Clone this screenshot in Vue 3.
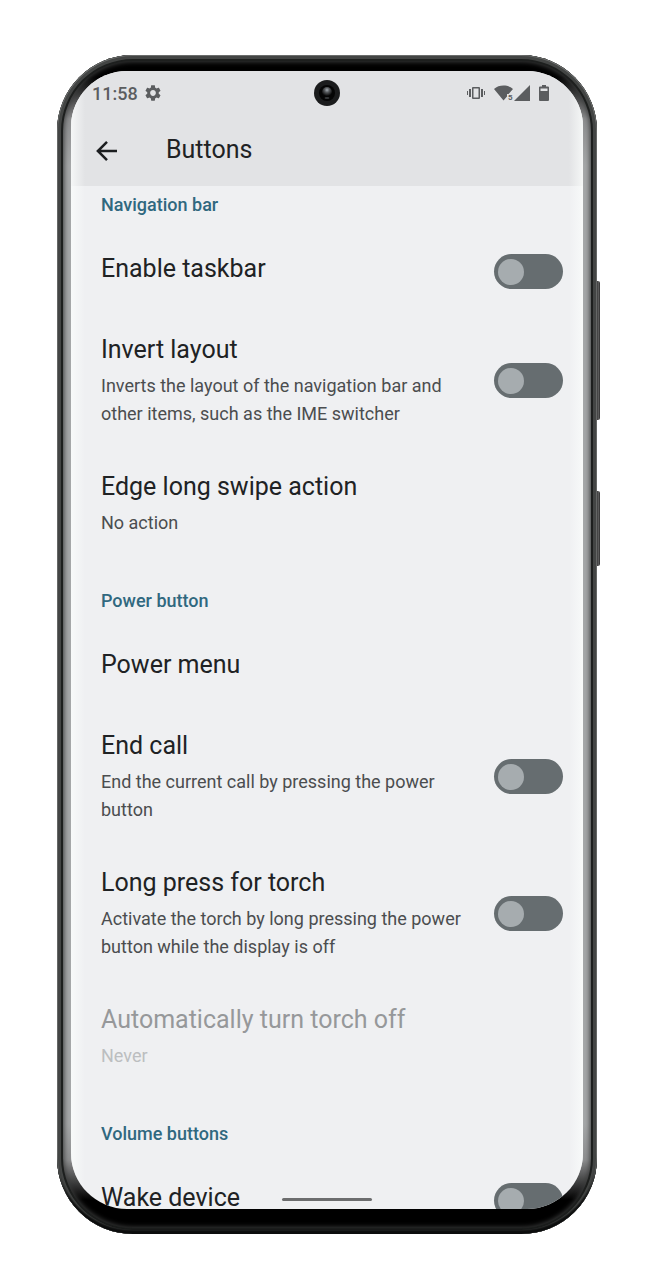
<script setup>
import { reactive } from 'vue'

const groups = reactive([
  {
    title: 'Navigation bar',
    rows: [
      { id: 'taskbar', label: 'Enable taskbar', toggle: true, on: false },
      {
        id: 'invert',
        label: 'Invert layout',
        note: 'Inverts the layout of the navigation bar and other items, such as the IME switcher',
        toggle: true,
        on: false,
      },
      { id: 'edge', label: 'Edge long swipe action', note: 'No action' },
    ],
  },
  {
    title: 'Power button',
    rows: [
      { id: 'menu', label: 'Power menu' },
      {
        id: 'endcall',
        label: 'End call',
        note: 'End the current call by pressing the power button',
        toggle: true,
        on: false,
      },
      {
        id: 'torch',
        label: 'Long press for torch',
        note: 'Activate the torch by long pressing the power button while the display is off',
        toggle: true,
        on: false,
      },
      { id: 'autotorch', label: 'Automatically turn torch off', note: 'Never', disabled: true },
    ],
  },
  {
    title: 'Volume buttons',
    rows: [{ id: 'wake', label: 'Wake device', toggle: true, on: false }],
  },
])
</script>

<template>
  <div class="stage">
    <div class="phone">
      <span class="side-key volume"></span>
      <span class="side-key power"></span>
      <div class="bezel">
        <div class="screen">
          <header class="top">
            <div class="status">
              <span class="clock">11:58</span>
              <svg class="gear" viewBox="2 2 20 20" aria-hidden="true">
                <path
                  d="M19.14 12.94c.04-.3.06-.61.06-.94 0-.32-.02-.64-.07-.94l2.03-1.58c.18-.14.23-.41.12-.61l-1.92-3.32c-.12-.22-.37-.29-.59-.22l-2.39.96c-.5-.38-1.03-.7-1.62-.94l-.36-2.54c-.04-.24-.24-.41-.48-.41h-3.84c-.24 0-.43.17-.47.41l-.36 2.54c-.59.24-1.13.57-1.62.94l-2.39-.96c-.22-.08-.47 0-.59.22L2.74 8.87c-.12.21-.08.47.12.61l2.03 1.58c-.05.3-.09.63-.09.94s.02.64.07.94l-2.03 1.58c-.18.14-.23.41-.12.61l1.92 3.32c.12.22.37.29.59.22l2.39-.96c.5.38 1.03.7 1.62.94l.36 2.54c.05.24.24.41.48.41h3.84c.24 0 .44-.17.47-.41l.36-2.54c.59-.24 1.13-.56 1.62-.94l2.39.96c.22.08.47 0 .59-.22l1.92-3.32c.12-.22.07-.47-.12-.61l-2.01-1.58zM12 15.6c-1.98 0-3.6-1.62-3.6-3.6s1.62-3.6 3.6-3.6 3.6 1.62 3.6 3.6-1.62 3.6-3.6 3.6z"
                />
              </svg>
              <svg class="vibrate" viewBox="0 0 18 14" aria-hidden="true">
                <path d="M0 5h1v4H0zM2 3h2v8H2zM14 3h2v8h-2zM17 5h1v4h-1z" />
                <path
                  fill-rule="evenodd"
                  d="M6 1h6a1 1 0 0 1 1 1v10a1 1 0 0 1-1 1H6a1 1 0 0 1-1-1V2a1 1 0 0 1 1-1zM6.500 2.500v9h5v-9z"
                />
              </svg>
              <svg class="wifi" viewBox="0 0 20 16" aria-hidden="true">
                <path d="M0 4C5-.6 14-.6 19 4L14.600 9H13V11.500L9.500 15.600z" />
                <text x="14" y="15">5</text>
              </svg>
              <svg class="signal" viewBox="0 0 16 16" aria-hidden="true">
                <path d="M0 16L16 0V16z" />
              </svg>
              <svg class="battery" viewBox="0 0 10 16" aria-hidden="true">
                <path
                  fill-rule="evenodd"
                  d="M3 0h4v1.500h2a1 1 0 0 1 1 1V15a1 1 0 0 1-1 1H1a1 1 0 0 1-1-1V2.500a1 1 0 0 1 1-1h2zM1.500 3.500v2.500h7v-2.500z"
                />
              </svg>
            </div>
            <div class="bar">
              <button class="back" type="button" aria-label="Back">
                <svg viewBox="0 0 24 24" aria-hidden="true">
                  <path d="M12 4.700L4.700 12l7.300 7.300M5 12h15" />
                </svg>
              </button>
              <h1>Buttons</h1>
            </div>
            <svg class="camera" viewBox="0 0 26 26" aria-hidden="true">
              <defs>
                <radialGradient id="lens" cx="50%" cy="30%" r="60%">
                  <stop offset="0" stop-color="#a4acb2" />
                  <stop offset=".4" stop-color="#56595c" />
                  <stop offset="1" stop-color="#060606" />
                </radialGradient>
              </defs>
              <circle cx="13" cy="13" r="13" fill="#1b1c1d" />
              <circle cx="13" cy="13" r="8" fill="#050505" />
              <circle cx="13" cy="12" r="5" fill="url(#lens)" />
              <ellipse cx="13" cy="18" rx="2.500" ry="1" fill="#36383a" />
            </svg>
          </header>

          <main class="list">
            <section v-for="group in groups" :key="group.title">
              <h2>{{ group.title }}</h2>
              <div
                v-for="row in group.rows"
                :key="row.id"
                class="row"
                :class="{ disabled: row.disabled }"
              >
                <div class="copy">
                  <label v-if="row.toggle" class="label" :for="row.id">{{ row.label }}</label>
                  <span v-else class="label">{{ row.label }}</span>
                  <p v-if="row.note">{{ row.note }}</p>
                </div>
                <input
                  v-if="row.toggle"
                  :id="row.id"
                  v-model="row.on"
                  class="switch"
                  type="checkbox"
                  role="switch"
                />
              </div>
            </section>
          </main>
          <span class="edges"></span>
          <span class="pill"></span>
        </div>
      </div>
    </div>
  </div>
</template>

<style>
body {
  background: #fff;
}
</style>

<style scoped>
.stage {
  box-sizing: border-box;
  height: 100vh;
  padding: 55px 57px 46px;
  font-family: Roboto, 'Liberation Sans', sans-serif;
  color: #202224;
}
.phone {
  position: relative;
  height: 100%;
}
.side-key {
  position: absolute;
  right: -3px;
  width: 5px;
  border-radius: 2px;
  background: linear-gradient(90deg, #222 0 40%, #6a6a6a 60%, #2b2b2b);
}
.volume {
  top: 226px;
  height: 139px;
}
.power {
  top: 436px;
  height: 75px;
}
.bezel {
  position: relative;
  box-sizing: border-box;
  height: 100%;
  padding: 16px 14px 25px;
  border-radius: 76px;
  background: linear-gradient(
    #000 22px,
    #8d8e8f 64px,
    #a5a7a8 110px,
    #a5a7a8 calc(100% - 110px),
    #8d8e8f calc(100% - 74px),
    #000 calc(100% - 34px)
  );
  box-shadow:
    inset 0 -5px 2px -1px #0c0d0d,
    inset 0 0 0 1px #6b6d6c,
    inset 0 0 0 4px #434544,
    inset 0 0 0 6px #1d1f1e,
    inset 0 0 5px 7px #3a3b3b;
}
.screen {
  position: relative;
  height: 100%;
  overflow: hidden;
  border-radius: 56px;
  background: #eff0f2;
}
.top {
  position: relative;
  height: 115px;
  background: #e2e3e5;
}
.status {
  display: flex;
  align-items: center;
  height: 44px;
  padding: 0 34px 0 21px;
  fill: #5b5d5f;
  color: #5b5d5f;
}
.status svg {
  overflow: visible;
}
.clock {
  font-size: 18px;
  font-weight: 500;
}
.gear {
  width: 16px;
  height: 16px;
  margin-left: 7px;
}
.vibrate {
  width: 18px;
  height: 14px;
  margin-left: auto;
}
.wifi {
  width: 20px;
  height: 16px;
  margin-left: 9px;
}
.wifi text {
  font-size: 8px;
  font-weight: 700;
}
.signal {
  width: 16px;
  height: 16px;
}
.battery {
  width: 10px;
  height: 16px;
  margin-left: 9px;
}
.bar {
  display: flex;
  align-items: center;
  gap: 44px;
  padding-left: 21px;
  height: 72px;
}
.back {
  display: flex;
  padding: 0;
  border: 0;
  background: none;
}
.back svg {
  width: 30px;
  height: 30px;
  fill: none;
  stroke: #1c1e20;
  stroke-width: 2;
}
h1 {
  margin: 0 0 3px;
  font-size: 25px;
  line-height: 32px;
  font-weight: 400;
}
.camera {
  position: absolute;
  top: 9px;
  left: calc(50% - 13px);
  width: 26px;
  height: 26px;
}
h2 {
  margin: 0;
  padding: 31px 30px 14px;
  font-size: 18px;
  line-height: 24px;
  font-weight: 500;
  color: #30687f;
}
section:first-child h2 {
  padding-top: 7px;
}
.row {
  display: flex;
  align-items: center;
  gap: 24px;
  padding: 20px 20px 20px 30px;
}
.copy {
  flex: 1;
  min-height: 41px;
}
.label {
  display: block;
  font-size: 25px;
  line-height: 35px;
}
p {
  margin: 5px 0 1px;
  font-size: 18px;
  line-height: 28px;
  color: #4b4d4f;
}
.disabled .label {
  color: #96989a;
}
.disabled p {
  color: #bcbec0;
}
.switch {
  appearance: none;
  flex: none;
  display: flex;
  align-items: center;
  box-sizing: border-box;
  width: 69px;
  height: 35px;
  margin: 0;
  padding: 0 4px;
  border-radius: 18px;
  background: #666d70;
}
.switch::before {
  content: '';
  width: 26px;
  height: 26px;
  border-radius: 50%;
  background: #a6acaf;
}
.switch:checked {
  justify-content: flex-end;
  background: #30687f;
}
.edges {
  position: absolute;
  inset: 0;
  pointer-events: none;
  background: linear-gradient(
    90deg,
    rgba(250, 252, 251, 0.8),
    rgba(250, 252, 251, 0.5) 5px,
    rgba(250, 252, 251, 0) 14px,
    rgba(250, 252, 251, 0) calc(100% - 14px),
    rgba(250, 252, 251, 0.5) calc(100% - 5px),
    rgba(250, 252, 251, 0.8)
  );
}
.pill {
  position: absolute;
  bottom: 8px;
  left: calc(50% - 45px);
  width: 90px;
  height: 3px;
  border-radius: 2px;
  background: #6c6d6e;
}
</style>
